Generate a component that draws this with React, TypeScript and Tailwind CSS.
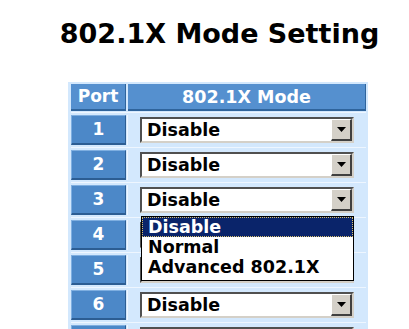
import React from 'react';

const ports = [1, 2, 3, 4, 5, 6, 7];
const options = ['Disable', 'Normal', 'Advanced 802.1X'];

// Bouton flèche de la liste déroulante, style Windows classique
function ArrowButton() {
  return (
    <div className="flex h-full w-[21px] items-center justify-center border-t border-l border-t-white border-l-white border-r-2 border-b-2 border-r-[#404040] border-b-[#404040] bg-[#d4d0c8]">
      <svg width="9" height="5" viewBox="0 0 9 5">
        <path d="M0 0H9L4.5 5Z" fill="#000" />
      </svg>
    </div>
  );
}

function ModeSelect({ open }: { open?: boolean }) {
  return (
    <div className="relative ml-[12px] mt-[2px] w-[214px]">
      <div className="flex h-[26px] w-full border-t-2 border-l-2 border-t-[#505050] border-l-[#505050] border-r-2 border-b-2 border-r-[#d4d0c8] border-b-[#d4d0c8] bg-white">
        <div className="flex-1 pl-[5px] pt-[1px] text-[17.5px] font-bold leading-[21px] text-black">
          Disable
        </div>
        <ArrowButton />
      </div>
      {open && (
        <div className="absolute left-[1px] top-full z-10 mt-[3px] h-[65px] w-[213px] overflow-hidden border border-black bg-white">
          {options.map((o, i) => (
            <div
              key={o}
              className={
                i === 0
                  ? 'h-[20px] overflow-hidden border border-dotted border-[#d8c070] bg-[#0a246a] pl-[5px] text-[17.5px] font-bold leading-[19px] text-white'
                  : 'h-[20px] overflow-hidden pl-[6px] text-[17.5px] font-bold leading-[21px] text-black'
              }
            >
              {o}
            </div>
          ))}
        </div>
      )}
    </div>
  );
}

export default function App() {
  return (
    <div className="h-[329px] w-[409px] overflow-hidden bg-white font-['DejaVu_Sans',sans-serif]">
      <h1 className="pl-[30px] pt-[18px] text-center text-[27px] font-bold leading-[32px] text-black">
        802.1X Mode Setting
      </h1>

      {/* Tableau des ports */}
      <div className="ml-[68px] mt-[32px] w-[300px] bg-[#d3e8fd] pl-[3px] pr-[2px]">
        <div className="border-b border-[#eef6ff] pt-[2px] pb-[1px]">
          <div className="flex h-[27px] gap-[2px]">
            <div className="flex w-[55px] items-center justify-center border-b-2 border-r border-[#2f649c] bg-[#5590cf] pt-[1px] text-[17px] font-bold text-white">
              Port
            </div>
            <div className="flex flex-1 items-center justify-center border-b-2 border-r border-[#2f649c] bg-[#5590cf] pt-[1px] text-[17.5px] font-bold text-white">
              802.1X Mode
            </div>
          </div>
        </div>

        {ports.map((p) => (
          <div key={p} className="border-b border-[#eef6ff] pt-[2px] pb-[2px]">
            <div className="flex h-[30px]">
              <div className="flex w-[55px] items-center justify-center border-t border-l border-[#7eaee0] border-b-2 border-r border-b-[#2c5d93] border-r-[#2c5d93] bg-[#4c88c8] text-[17px] font-bold text-white">
                {p}
              </div>
              <div className="ml-[1px] flex-1 border-l border-[#eef6ff]">
                <ModeSelect open={p === 3} />
              </div>
            </div>
          </div>
        ))}
      </div>
    </div>
  );
}
